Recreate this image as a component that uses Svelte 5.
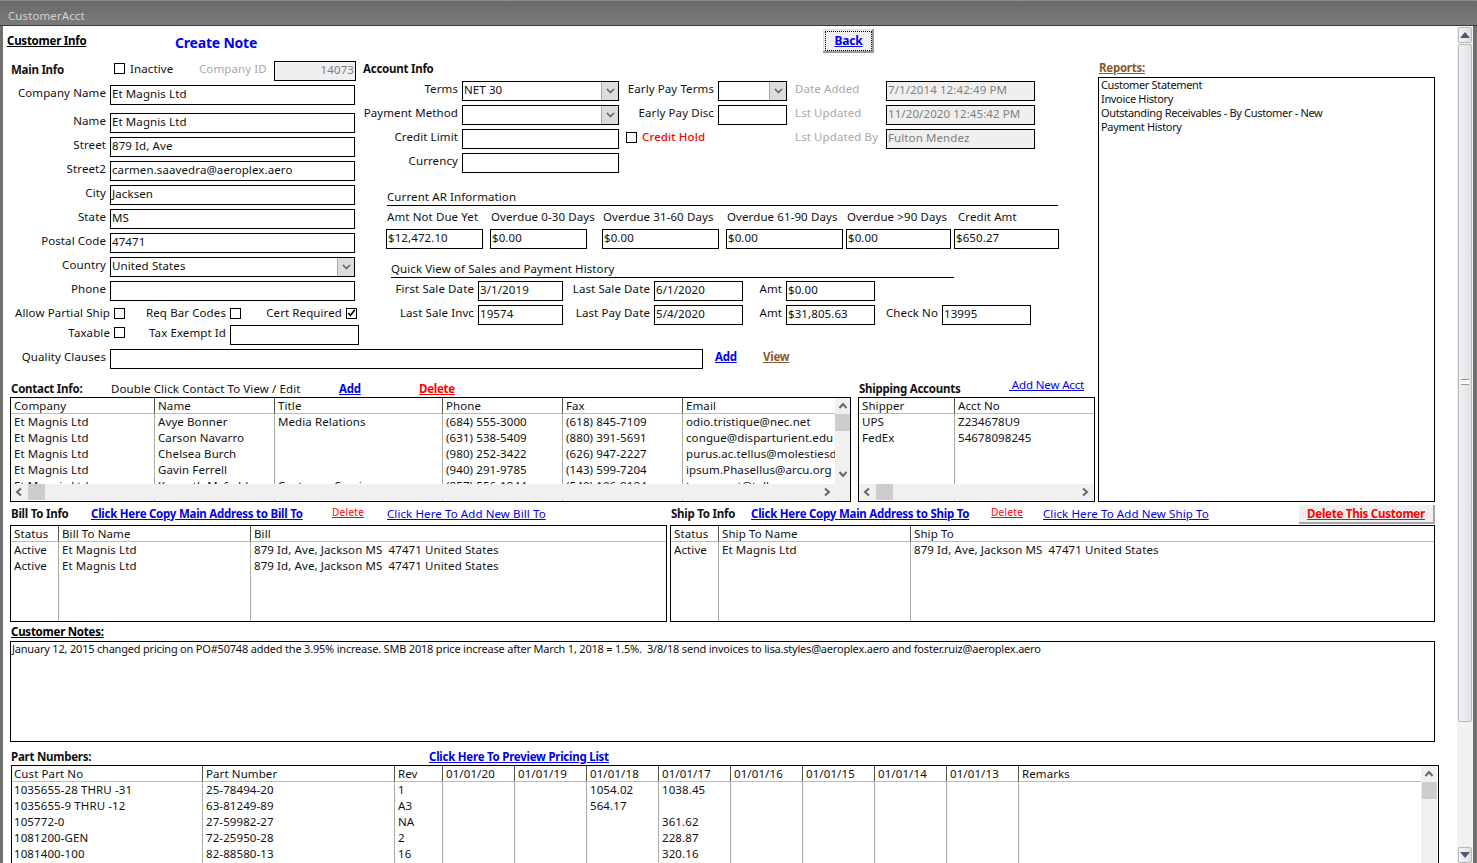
<script>
  const contactCols = [
    { w: 144, h: 'Company', c: ['Et Magnis Ltd', 'Et Magnis Ltd', 'Et Magnis Ltd', 'Et Magnis Ltd', 'Et Magnis Ltd'] },
    { w: 120, h: 'Name', c: ['Avye Bonner', 'Carson Navarro', 'Chelsea Burch', 'Gavin Ferrell', 'Kenneth Mcfadden'] },
    { w: 168, h: 'Title', c: ['Media Relations', '', '', '', 'Customer Service'] },
    { w: 120, h: 'Phone', c: ['(684) 555-3000', '(631) 538-5409', '(980) 252-3422', '(940) 291-9785', '(857) 556-1844'] },
    { w: 120, h: 'Fax', c: ['(618) 845-7109', '(880) 391-5691', '(626) 947-2227', '(143) 599-7204', '(540) 106-8184'] },
    { w: 154, h: 'Email', c: ['odio.tristique@nec.net', 'congue@disparturient.edu', 'purus.ac.tellus@molestiesdapibus.org', 'ipsum.Phasellus@arcu.org', 'tempus.at@tellus.org'] }
  ];
  const shipCols = [
    { w: 96, h: 'Shipper', c: ['UPS', 'FedEx'] },
    { w: 139, h: 'Acct No', c: ['Z234678U9', '54678098245'], last: true }
  ];
  const addr = '879 Id, Ave, Jackson MS\u00a0\u00a047471 United States';
  const billCols = [
    { w: 48, h: 'Status', c: ['Active', 'Active'] },
    { w: 192, h: 'Bill To Name', c: ['Et Magnis Ltd', 'Et Magnis Ltd'] },
    { w: 415, h: 'Bill', c: [addr, addr], last: true }
  ];
  const shipToCols = [
    { w: 48, h: 'Status', c: ['Active'] },
    { w: 192, h: 'Ship To Name', c: ['Et Magnis Ltd'] },
    { w: 523, h: 'Ship To', c: [addr], last: true }
  ];
  const partCols = [
    { w: 191, h: 'Cust Part No', c: ['1035655-28 THRU -31', '1035655-9 THRU -12', '105772-0', '1081200-GEN', '1081400-100'] },
    { w: 192, h: 'Part Number', c: ['25-78494-20', '63-81249-89', '27-59982-27', '72-25950-28', '82-88580-13'] },
    { w: 48, h: 'Rev', c: ['1', 'A3', 'NA', '2', '16'] },
    { w: 72, h: '01/01/20', c: [] },
    { w: 72, h: '01/01/19', c: [] },
    { w: 72, h: '01/01/18', c: ['1054.02', '564.17'] },
    { w: 72, h: '01/01/17', c: ['1038.45', '', '361.62', '228.87', '320.16'] },
    { w: 72, h: '01/01/16', c: [] },
    { w: 72, h: '01/01/15', c: [] },
    { w: 72, h: '01/01/14', c: [] },
    { w: 72, h: '01/01/13', c: [] },
    { w: 403, h: 'Remarks', c: [], last: true }
  ];
  const leftFields = [
    ['Name', 'Et Magnis Ltd'],
    ['Street', '879 Id, Ave'],
    ['Street2', 'carmen.saavedra@aeroplex.aero'],
    ['City', 'Jacksen'],
    ['State', 'MS'],
    ['Postal Code', '47471']
  ];
  const arCols = [
    { w: 97, gap: 7, h: 'Amt Not Due Yet', v: '$12,472.10', pad: 1 },
    { w: 97, gap: 15, h: 'Overdue 0-30 Days', v: '$0.00', pad: 1 },
    { w: 117, gap: 7, h: 'Overdue 31-60 Days', v: '$0.00', pad: 1 },
    { w: 117, gap: 3, h: 'Overdue 61-90 Days', v: '$0.00', pad: 1 },
    { w: 105, gap: 3, h: 'Overdue >90 Days', v: '$0.00', pad: 1 },
    { w: 105, gap: 0, h: 'Credit Amt', v: '$650.27', pad: 4 }
  ];
</script>

{#snippet chev()}
  <svg class="chev" viewBox="0 0 9 6" width="9" height="6"><path d="M1 1l3.5 3.5L8 1" fill="none" stroke="#555" stroke-width="1.3"/></svg>
{/snippet}

{#snippet check(on)}
  <span class="cb">
    {#if on}<svg viewBox="0 0 11 11" width="10" height="10"><path d="M1.500 5.500l2.700 3L9.500 1.500" fill="none" stroke="#000" stroke-width="2"/></svg>{/if}
  </span>
{/snippet}

{#snippet combo(value, cls)}
  <span class="inp combo {cls}"><span>{value}</span><span class="dd">{@render chev()}</span></span>
{/snippet}

{#snippet hbar()}
  <div class="hbar">
    <svg class="arr" viewBox="0 0 8 10" width="8" height="10"><path d="M6 1.500L2 5l4 3.500" fill="none" stroke="#666" stroke-width="2"/></svg>
    <span class="hthumb"></span>
    <svg class="arr right" viewBox="0 0 8 10" width="8" height="10"><path d="M2 1.500L6 5 2 8.500" fill="none" stroke="#666" stroke-width="2"/></svg>
  </div>
{/snippet}

{#snippet vbar()}
  <div class="vbar">
    <svg viewBox="0 0 10 8" width="10" height="8"><path d="M1.500 6L5 2l3.500 4" fill="none" stroke="#666" stroke-width="2"/></svg>
    <span class="vthumb"></span>
    <svg class="down" viewBox="0 0 10 8" width="10" height="8"><path d="M1.500 2L5 6l3.500-4" fill="none" stroke="#666" stroke-width="2"/></svg>
  </div>
{/snippet}

{#snippet grid(cols)}
  <div class="cols">
    {#each cols as col}
      <div class="col" class:last={col.last} style="width:{col.w}px">
        <div class="gh">{col.h}</div>
        {#each col.c as v}<div class="gc">{v}</div>{/each}
      </div>
    {/each}
  </div>
{/snippet}

<div class="window">
  <div class="titlebar">CustomerAcct</div>
  <div class="frame">
    <div class="page">
      <div class="head">
        <a class="section-title" href="#top">Customer Info</a>
        <span class="create">Create Note</span>
        <span class="back"><a href="#top">Back</a></span>
      </div>

      <div class="upper">
        <div class="upper-left">
          <div class="form-top">
            <div class="main-left">
              <div class="main-head">
                <b class="mi">Main Info</b>
                {@render check(false)}
                <span class="inactive">Inactive</span>
                <span class="cid gray">Company ID</span>
                <span class="inp ro idbox">14073</span>
              </div>
              <div class="fld company"><label>Company Name</label><span class="inp wide">Et Magnis Ltd</span></div>
              {#each leftFields as f}
                <div class="fld"><label>{f[0]}</label><span class="inp wide">{f[1]}</span></div>
              {/each}
              <div class="fld"><label>Country</label>{@render combo('United States', 'wide')}</div>
              <div class="fld"><label>Phone</label><span class="inp wide"></span></div>
              <div class="checks">
                <span class="c1">Allow Partial Ship</span>{@render check(false)}
                <span class="c2">Req Bar Codes</span>{@render check(false)}
                <span class="c3">Cert Required</span>{@render check(true)}
              </div>
              <div class="taxrow">
                <span class="c1">Taxable</span>{@render check(false)}
                <span class="c2b">Tax Exempt Id</span><span class="inp taxid"></span>
              </div>
            </div>

            <div class="main-mid">
              <b class="acct">Account Info</b>
              <div class="acct-grid">
                <div class="acol a1">
                  <div class="fld"><label>Terms</label>{@render combo('NET 30', 'w157')}</div>
                  <div class="fld"><label>Payment Method</label>{@render combo('', 'w157')}</div>
                  <div class="fld"><label>Credit Limit</label><span class="inp w157"></span></div>
                  <div class="fld"><label>Currency</label><span class="inp w157"></span></div>
                </div>
                <div class="acol a2">
                  <div class="fld"><label>Early Pay Terms</label>{@render combo('', 'w69')}</div>
                  <div class="fld"><label>Early Pay Disc</label><span class="inp w69"></span></div>
                  <div class="hold">{@render check(false)}<span>Credit Hold</span></div>
                </div>
                <div class="acol a3">
                  <div class="fld"><label class="gray">Date Added</label><span class="inp ro w149">7/1/2014 12:42:49 PM</span></div>
                  <div class="fld"><label class="gray">Lst Updated</label><span class="inp ro w149">11/20/2020 12:45:42 PM</span></div>
                  <div class="fld"><label class="gray">Lst Updated By</label><span class="inp ro w149">Fulton Mendez</span></div>
                </div>
              </div>

              <div class="rule ar-title">Current AR Information</div>
              <div class="ar">
                {#each arCols as a}
                  <div class="arc" style="width:{a.w + a.gap}px">
                    <span class="arh" style="padding-left:{a.pad}px">{a.h}</span>
                    <span class="inp" style="width:{a.w}px">{a.v}</span>
                  </div>
                {/each}
              </div>

              <div class="rule qv-title">Quick View of Sales and Payment History</div>
              <div class="qv">
                <div class="qrow">
                  <label class="q1">First Sale Date</label><span class="inp w85">3/1/2019</span>
                  <label class="q2">Last Sale Date</label><span class="inp w89">6/1/2020</span>
                  <label class="q3">Amt</label><span class="inp w89">$0.00</span>
                </div>
                <div class="qrow">
                  <label class="q1">Last Sale Invc</label><span class="inp w85">19574</span>
                  <label class="q2">Last Pay Date</label><span class="inp w89">5/4/2020</span>
                  <label class="q3">Amt</label><span class="inp w89">$31,805.63</span>
                  <label class="q4">Check No</label><span class="inp w89">13995</span>
                </div>
              </div>
            </div>
          </div>

          <div class="fld quality">
            <label>Quality Clauses</label><span class="inp qc"></span>
            <a class="lnk qadd" href="#top">Add</a>
            <a class="lnk brown" href="#top">View</a>
          </div>

          <div class="lists">
            <div class="contact">
              <div class="list-head">
                <b class="ci">Contact Info:</b>
                <span class="dbl">Double Click Contact To View / Edit</span>
                <a class="lnk cadd" href="#top">Add</a>
                <a class="lnk red" href="#top">Delete</a>
              </div>
              <div class="table contact-t">
                {@render grid(contactCols)}
                {@render vbar()}
                {@render hbar()}
              </div>
            </div>
            <div class="shipping">
              <div class="list-head">
                <b class="sa">Shipping Accounts</b>
                <a class="addacct" href="#top">&nbsp;Add New Acct</a>
              </div>
              <div class="table ship-t">
                {@render grid(shipCols)}
                {@render hbar()}
              </div>
            </div>
          </div>
        </div>

        <div class="reports">
          <a class="rep-title" href="#top">Reports:</a>
          <div class="rep-box">
            <div>Customer Statement</div>
            <div>Invoice History</div>
            <div>Outstanding Receivables - By Customer - New</div>
            <div>Payment History</div>
          </div>
        </div>
      </div>

      <div class="bill-head">
        <b class="bh1">Bill To Info</b>
        <a class="lnk l1" href="#top">Click Here Copy Main Address to Bill To</a>
        <a class="small" href="#top">Delete</a>
        <a class="plain p1" href="#top">Click Here To Add New Bill To</a>
        <b class="bh2">Ship To Info</b>
        <a class="lnk l2" href="#top">Click Here Copy Main Address to Ship To</a>
        <a class="small s2" href="#top">Delete</a>
        <a class="plain p2" href="#top">Click Here To Add New Ship To</a>
        <span class="delcust"><a href="#top">Delete This Customer</a></span>
      </div>
      <div class="bill-tables">
        <div class="table bill-t">{@render grid(billCols)}</div>
        <div class="table shipto-t">{@render grid(shipToCols)}</div>
      </div>

      <a class="section-title notes-title" href="#top">Customer Notes:</a>
      <div class="notes">January 12, 2015 changed pricing on PO#50748 added the 3.95% increase. SMB 2018 price increase after March 1, 2018 = 1.5%.&nbsp; 3/8/18 send invoices to lisa.styles@aeroplex.aero and foster.ruiz@aeroplex.aero</div>

      <div class="parts-head">
        <b>Part Numbers:</b>
        <a class="lnk" href="#top">Click Here To Preview Pricing List</a>
      </div>
      <div class="table parts-t">
        {@render grid(partCols)}
        <div class="vbar parts-v">
          <svg viewBox="0 0 10 8" width="10" height="8"><path d="M1.500 6L5 2l3.500 4" fill="none" stroke="#666" stroke-width="2"/></svg>
          <span class="vthumb"></span>
        </div>
      </div>
    </div>

    <div class="pagebar">
      <span class="pbtn"><svg viewBox="0 0 10 6" width="10" height="6"><path d="M5 0l5 6H0z" fill="#4a5a78"/></svg></span>
      <span class="pthumb"><span class="grip"></span></span>
      <span class="pbtn down"><svg viewBox="0 0 10 6" width="10" height="6"><path d="M0 0h10L5 6z" fill="#4a5a78"/></svg></span>
    </div>
  </div>
</div>

<style>
  :global(body) { margin: 0; background: #fff; }
  * { box-sizing: border-box; }
  .window {
    height: 100vh; overflow: hidden; display: flex; flex-direction: column;
    font: 11.5px/16px "Noto Sans", "Open Sans", sans-serif; color: #111; letter-spacing: .1px;
    background: #6e6e6e;
  }
  a { color: inherit; }
  label { display: block; text-align: right; white-space: nowrap; }
  b { font-weight: 700; letter-spacing: -.25px; }
  .titlebar {
    height: 26px; flex: none; padding: 7px 0 0 8px; line-height: 16px; color: #d2d2d2;
    background: linear-gradient(#6a6a6a, #7b7b7b); border-top: 1px solid #8c8c8c; border-bottom: 1px solid #3a3a3a;
  }
  .frame { flex: 1; display: flex; min-height: 0; padding: 0 4px 0 3px; background: #6f6f6f; }
  .page { flex: 1; background: #fff; overflow: hidden; min-width: 0; }

  .pagebar { width: 16px; flex: none; background: #f1f1f3; display: flex; flex-direction: column; padding: 1px 1px 0; }
  .pbtn { height: 16px; flex: none; border: 1px solid #b6b8bc; border-radius: 2px; background: linear-gradient(90deg,#f6f6f7,#dcdde0); display: flex; align-items: center; justify-content: center; }
  .pthumb { height: 678px; flex: none; margin-top: 1px; border: 1px solid #b6b8bc; border-radius: 2px; background: linear-gradient(90deg,#f2f2f3,#e0e1e4); display: flex; align-items: center; justify-content: center; }
  .grip { width: 8px; height: 6px; border-top: 1px solid #999; border-bottom: 1px solid #999; background: linear-gradient(#fff 40%, #999 40%, #999 60%, #fff 60%); margin-top: -2px; }
  .pbtn.down { margin-top: auto; }

  .head { display: grid; grid-template-columns: 172px 648px auto; height: 35px; }
  .section-title { font-weight: 700; color: #000; letter-spacing: -.25px; }
  .head .section-title { padding-left: 4px; margin-top: 7px; justify-self: start; height: 16px; }
  .create { color: #0000ee; font-weight: 700; font-size: 14px; line-height: 18px; margin-top: 8px; letter-spacing: -.2px; }
  .back {
    width: 51px; height: 24px; margin-top: 3px; background: #f0f0f0; text-align: center; font-weight: 700; font-size: 12px;
    outline: 1px dotted #000; outline-offset: -3px; box-shadow: inset -2px -2px 0 #9a9a9a, inset 1px 1px 0 #ddd; color: #0000ee; line-height: 23px; letter-spacing: -.2px;
  }

  .upper { display: flex; }
  .upper-left { width: 1095px; flex: none; }
  .form-top { display: flex; height: 288px; }
  .main-left { width: 360px; flex: none; }
  .main-head { display: flex; align-items: flex-start; height: 19px; margin-bottom: 5px; }
  .main-head .cb { margin-top: 2px; }
  .mi { margin-left: 8px; width: 103px; flex: none; line-height: 17px; }
  .inactive { margin-left: 5px; width: 69px; flex: none; }
  .cid { width: 75px; flex: none; }
  .gray { color: #a8a8a8; }
  .idbox { width: 82px; height: 19px; text-align: right; padding-right: 1px; }

  .cb { width: 11px; height: 11px; flex: none; border: 1px solid #000; background: #fff; display: inline-flex; align-items: center; justify-content: center; }

  .inp {
    display: block; height: 20px; border: 1px solid #000; background: #fff; padding: 0 1px; line-height: 15px;
    white-space: nowrap; overflow: hidden; flex: none;
  }
  .ro { background: #efefef; color: #808080; }
  .wide { width: 245px; }
  .w157 { width: 157px; }
  .w69 { width: 69px; }
  .w149 { width: 149px; }
  .w85 { width: 85px; }
  .w89 { width: 89px; }
  .combo { display: flex; justify-content: space-between; padding-right: 0; }
  .dd { width: 17px; flex: none; height: 18px; background: #dcdcdc; border-left: 1px solid #aaa; display: flex; align-items: center; justify-content: center; }

  .fld { display: flex; height: 20px; margin-bottom: 4px; gap: 4px; }
  .fld label { width: 103px; line-height: 15px; }
  .fld.company { margin-bottom: 8px; }

  .checks, .taxrow { display: flex; align-items: center; height: 16px; }
  .checks { margin-bottom: 4px; }
  .checks .cb, .taxrow .cb { margin-left: 4px; }
  .c1 { width: 107px; flex: none; text-align: right; white-space: nowrap; }
  .c2 { width: 101px; flex: none; text-align: right; }
  .c3 { width: 101px; flex: none; text-align: right; }
  .taxrow { height: 20px; align-items: flex-start; }
  .taxrow .c1 { line-height: 16px; }
  .taxrow .cb { margin-top: 2px; }
  .c2b { width: 101px; flex: none; text-align: right; }
  .taxid { width: 129px; margin-left: 4px; }

  .main-mid { flex: 1; min-width: 0; }
  .acct { display: block; height: 20px; line-height: 16px; }
  .acct-grid { display: flex; height: 96px; }
  .a1 { width: 256px; flex: none; }
  .a1 .fld label { width: 95px; }
  .a2 { width: 160px; flex: none; margin-left: 8px; }
  .a2 .fld label { width: 87px; }
  .a3 { margin-left: 8px; }
  .a3 .fld { gap: 0; }
  .a3 .fld label { width: 91px; text-align: left; }
  .hold { display: flex; align-items: center; height: 16px; color: #ff0000; font-weight: 500; gap: 5px; margin-left: -1px; }

  .rule { border-bottom: 1px solid #000; line-height: 14px; height: 16px; }
  .ar-title { margin: 13px 0 0 24px; width: 671px; }
  .ar { display: flex; margin: 4px 0 0 23px; }
  .arc { display: flex; flex-direction: column; gap: 3px; flex: none; }
  .arh { white-space: nowrap; height: 16px; line-height: 14px; }
  .qv-title { margin: 13px 0 0 28px; width: 563px; }
  .qv { margin-top: 3px; }
  .qrow { display: flex; height: 20px; margin-bottom: 4px; }
  .qrow label { line-height: 15px; flex: none; }
  .q1 { width: 111px; margin-right: 4px; }
  .q2 { width: 91px; padding-right: 4px; }
  .q3 { width: 43px; padding-right: 4px; }
  .q4 { width: 67px; padding-right: 4px; }

  .quality { margin-bottom: 0; height: 20px; }
  .qc { width: 593px; }
  .lnk { color: #0000ee; font-weight: 700; letter-spacing: -.25px; white-space: nowrap; flex: none; }
  .brown { color: #8a5a2b; }
  .red { color: #ff0000; }
  .qadd { margin-left: 8px; width: 44px; }

  .lists { display: flex; margin-top: 12px; gap: 7px; padding-left: 7px; }
  .list-head { display: flex; height: 16px; white-space: nowrap; }
  .ci { margin-left: 1px; width: 100px; line-height: 15px; flex: none; }
  .dbl { width: 228px; flex: none; }
  .cadd { width: 80px; }
  .sa { margin-left: 1px; width: 150px; flex: none; }
  .addacct { color: #0000ee; margin-top: -4px; letter-spacing: -.15px; }

  .table { position: relative; border: 1px solid #000; overflow: hidden; background: #fff; }
  .cols { display: flex; height: 100%; }
  .col { flex: none; border-right: 1px solid #aaa; }
  .col.last { border-right: 0; }
  .gh { height: 16px; padding-left: 3px; line-height: 15px; border-bottom: 1px solid #bbb; white-space: nowrap; margin-right: -1px; border-right: 1px solid #555; }
  .col.last .gh { border-right: 0; margin-right: 0; }
  .gc { height: 16px; padding-left: 3px; line-height: 15px; white-space: nowrap; overflow: hidden; }
  .parts-t .col:first-child > div { padding-left: 2px; }
  .contact-t { width: 841px; height: 105px; }
  .ship-t { width: 237px; height: 105px; }
  .hbar { position: absolute; left: 0; right: 0; bottom: 1px; height: 16px; background: #f0f0f0; display: flex; align-items: center; padding-left: 4px; }
  .contact-t .hbar { right: 14px; }
  .hthumb { position: absolute; left: 17px; width: 17px; height: 16px; background: #cdcdcd; }
  .arr.right { margin-left: auto; margin-right: 5px; }
  .vbar { position: absolute; right: 0; top: 0; bottom: 0; width: 15px; background: #f0f0f0; display: flex; flex-direction: column; align-items: center; padding-top: 4px; }
  .vthumb { width: 15px; height: 17px; background: #cdcdcd; margin-top: 4px; flex: none; }
  .vbar .down { position: absolute; top: 72px; }

  .reports { flex: 1; }
  .rep-title { display: block; color: #8a5a2b; font-weight: 700; padding-left: 1px; height: 16px; letter-spacing: -.25px; line-height: 14px; }
  .rep-box { width: 337px; height: 425px; border: 1px solid #000; padding: 0 2px; font-size: 11px; line-height: 14px; letter-spacing: -.33px; }

  .bill-head { display: flex; height: 23px; align-items: center; white-space: nowrap; padding-left: 8px; }
  .bill-head > * { flex: none; }
  .bh1 { width: 80px; }
  .l1 { width: 241px; }
  .small { color: #ff0000; font-size: 10px; letter-spacing: .3px; width: 55px; margin-bottom: 4px; }
  .s2 { width: 52px; }
  .plain { color: #0000ee; }
  .p1 { width: 284px; }
  .bh2 { width: 80px; }
  .l2 { width: 240px; }
  .p2 { width: 256px; }
  .delcust { width: 136px; height: 19px; padding-right: 2px; background: #f0f0f0; text-align: center; color: #ff0000; font-weight: 700; box-shadow: inset -2px -2px 0 #a8a8a8; line-height: 18px; letter-spacing: -.25px; margin-top: 2px; }
  .bill-tables { display: flex; gap: 3px; padding-left: 7px; }
  .bill-t { width: 657px; height: 97px; }
  .shipto-t { width: 765px; height: 97px; }

  .notes-title { display: block; padding-left: 8px; margin-top: 2px; height: 17px; line-height: 16px; }
  .notes { margin: 0 0 0 7px; width: 1425px; height: 101px; border: 1px solid #000; padding: 0 1px; font-size: 11px; line-height: 14px; letter-spacing: -.2px; white-space: nowrap; overflow: hidden; }
  .parts-head { display: flex; height: 23px; align-items: flex-end; padding-left: 8px; }
  .parts-head b { width: 418px; flex: none; }
  .parts-t { margin-left: 8px; width: 1428px; height: 120px; }
  .parts-v { right: 1px; width: 16px; }
</style>
